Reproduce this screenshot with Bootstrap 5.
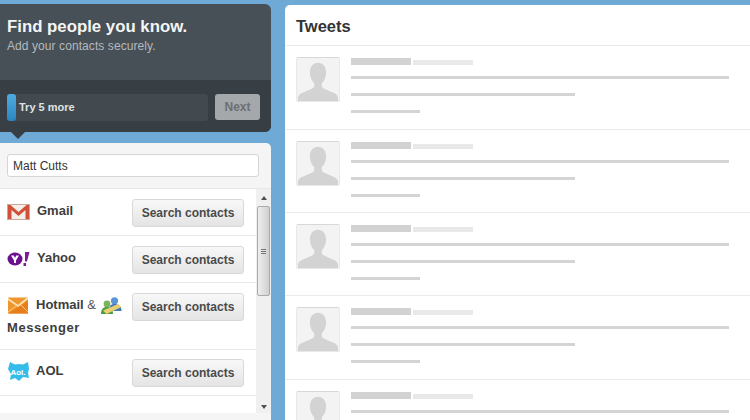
<!DOCTYPE html>
<html lang="en">
<head>
    <meta charset="UTF-8">
    <meta name="viewport" content="width=device-width, initial-scale=1.0">
    <title>Find people you know</title>
    <link href="https://cdn.jsdelivr.net/npm/bootstrap@5.3.0/dist/css/bootstrap.min.css" rel="stylesheet">
    <style>
        html, body {
            height: 420px;
            overflow: hidden;
        }
        body {
            background-color: #6fa9d6;
            font-family: "Liberation Sans", Arial, sans-serif;
            color: #333;
        }
        .page-wrap {
            height: 420px;
            padding-top: 4px;
            gap: 14px;
        }
        .side-col {
            width: 271px;
            flex: none;
        }
        .main-col {
            margin-top: 1px;
            border: 0;
            border-radius: 5px 0 0 0;
            background: #fff;
        }
        /* dark box */
        .finder-box {
            height: 128px;
            background: #474f57;
            border-radius: 0 6px 6px 0;
            position: relative;
        }
        .finder-box::after {
            content: "";
            position: absolute;
            left: 11px;
            top: 128px;
            border: 7px solid transparent;
            border-bottom: 0;
            border-top-color: #373f45;
        }
        .finder-top {
            height: 76px;
            padding: 13px 7px 0;
        }
        .finder-top h1 {
            font-size: 16.8px;
            line-height: 20px;
            font-weight: 700;
            color: #f4f5f5;
            margin: 0 0 2px;
        }
        .finder-top p {
            font-size: 12px;
            line-height: 15px;
            letter-spacing: .08px;
            color: #b5babd;
            margin: 0;
        }
        .finder-bottom {
            height: 52px;
            background: #373f45;
            padding: 14px 11px 0 7px;
            border-radius: 0 0 6px 0;
            gap: 7px;
        }
        .try-track {
            width: 201px;
            height: 27px;
            background: #424a50;
            border-radius: 3px;
            font-size: 11px;
            font-weight: 700;
            color: #dfe2e3;
        }
        .try-fill {
            width: 9px;
            height: 27px;
            background: linear-gradient(#4fabdf, #2a86bf);
            border-radius: 3px;
            margin-right: 3px;
        }
        .next-btn {
            width: 45px;
            height: 26px;
            padding: 0;
            border: 0;
            border-radius: 3px;
            background: #a5a8ab;
            color: #6c7073;
            font-size: 12px;
            font-weight: 700;
        }
        /* search panel */
        .contact-panel {
            height: 277px;
            margin-top: 11px;
            background: #f5f5f5;
            border-radius: 0 5px 0 0;
            padding-top: 11px;
        }
        .name-input {
            display: block;
            width: 252px;
            height: 23px;
            margin-left: 7px;
            padding: 0 5px;
            border: 1px solid #d5d5d5;
            border-radius: 3px;
            font-size: 12px;
            color: #333;
        }
        .contact-scroll {
            margin-top: 11px;
            height: 225px;
            background: #fff;
            border-top: 1px solid #e8e8e8;
        }
        .contact-item {
            padding: 10px 12px 0 7px;
            border-bottom: 1px solid #e8e8e8;
            height: 47px;
        }
        .contact-item.tall-item {
            height: 67px;
        }
        .contact-item.last-item {
            height: 46px;
            padding-top: 9px;
        }
        .contact-name {
            width: 120px;
            font-size: 13px;
            line-height: 23px;
            font-weight: 700;
            color: #3d3d3d;
        }
        .contact-name svg {
            vertical-align: middle;
            margin-right: 7px;
        }
        .contact-name .amp {
            font-weight: 400;
            color: #555;
        }
        .contact-name .msn-icon {
            margin: 0 0 0 1px;
        }
        .wide-word {
            letter-spacing: .55px;
        }
        .search-btn {
            width: 112px;
            height: 28px;
            padding: 0;
            flex: none;
            border: 1px solid #d8d8d8;
            border-radius: 3px;
            background: linear-gradient(#f8f8f8, #e4e4e4);
            color: #4a4a4a;
            font-size: 12px;
            font-weight: 700;
        }
        /* fake scrollbar */
        .scroll-rail {
            width: 15px;
            flex: none;
            background: #f0f0f0;
            padding-top: 7px;
        }
        .scroll-arrow-up {
            border: 3px solid transparent;
            border-top: 0;
            border-bottom: 4px solid #505050;
            width: 0;
        }
        .scroll-arrow-down {
            border: 3px solid transparent;
            border-bottom: 0;
            border-top: 4px solid #505050;
            width: 0;
            margin-top: 109px;
        }
        .scroll-thumb {
            width: 13px;
            height: 90px;
            margin-top: 6px;
            border: 1px solid #aaa;
            border-radius: 2px;
            background: linear-gradient(90deg, #eee, #cfcfcf);
        }
        .scroll-thumb i {
            display: block;
            width: 5px;
            height: 5px;
            border-top: 1px solid #777;
            border-bottom: 1px solid #777;
            position: relative;
        }
        .scroll-thumb i::after {
            content: "";
            position: absolute;
            left: 0;
            right: 0;
            top: 1px;
            border-top: 1px solid #777;
        }
        /* tweets */
        .tweets-head {
            height: 41px;
            padding: 11px 11px 0;
            border-bottom: 1px solid #ebebeb;
        }
        .tweets-head h2 {
            font-size: 16.5px;
            line-height: 20px;
            font-weight: 700;
            color: #333;
            margin: 0;
        }
        #tweet-list {
            margin-top: .4px;
        }
        .tweet-row {
            height: 83.3px;
            flex: none;
            padding: 11px 21px 0 11px;
            border-bottom: 1px solid #ebebeb;
            gap: 11px;
        }
        .tweet-pic {
            width: 44px;
            height: 45px;
            flex: none;
            background: #f3f3f3;
            border: 1px solid #e8e8e8;
            border-top-color: #d8d8d8;
            border-radius: 2px;
            display: block;
        }
        .name-bar {
            width: 60px;
            height: 7px;
            margin-top: 1px;
            background: #d2d2d2;
        }
        .meta-bar {
            width: 60px;
            height: 5px;
            margin: 3px 0 0 2px;
            background: #e9e9e9;
        }
        .line-bar {
            height: 3px;
            background: #d4d4d4;
            margin-top: 14px;
        }
        .line-bar.first-line {
            margin-top: 11px;
        }
        .w-long { width: 378px; }
        .w-mid { width: 224px; }
        .w-short { width: 69px; }
    </style>
</head>
<body>
    <div class="page-wrap d-flex">
        <div class="side-col">
            <div class="finder-box">
                <div class="finder-top">
                    <h1>Find people you know.</h1>
                    <p>Add your contacts securely.</p>
                </div>
                <div class="finder-bottom d-flex align-items-start">
                    <div class="try-track d-flex align-items-center">
                        <div class="try-fill"></div>
                        <span>Try 5 more</span>
                    </div>
                    <button class="btn next-btn">Next</button>
                </div>
            </div>

            <div class="contact-panel">
                <input type="text" class="form-control name-input" value="Matt Cutts">
                <div class="contact-scroll d-flex">
                    <div class="flex-grow-1">
                        <div class="contact-item d-flex justify-content-between align-items-start">
                            <div class="contact-name">
                                <svg width="23" height="16" viewBox="0 0 23 16">
                                    <rect x="0.5" y="0.5" width="22" height="15" fill="#f6efe8" stroke="#c9a99a"/>
                                    <path d="M1 15V1h2.500L11.500 8 19.500 1H22v14h-3.500V6l-7 6-7-6v9z" fill="#d0503a"/>
                                </svg>Gmail
                            </div>
                            <button class="btn search-btn">Search contacts</button>
                        </div>
                        <div class="contact-item d-flex justify-content-between align-items-start">
                            <div class="contact-name">
                                <svg width="23" height="14" viewBox="0 0 23 14">
                                    <ellipse cx="8" cy="7" rx="7.500" ry="6.500" fill="#6d0f8f"/>
                                    <path d="M4 3.500h2.800L8 6l1.200-2.500H12L9 8.500V11H7V8.500z" fill="#fff"/>
                                    <path d="M18 0h4.500l-2.500 9.500h-2zM16.500 11h2.500v3h-2.500z" fill="#7b1a9b"/>
                                </svg>Yahoo
                            </div>
                            <button class="btn search-btn">Search contacts</button>
                        </div>
                        <div class="contact-item tall-item d-flex justify-content-between align-items-start">
                            <div class="contact-name">
                                <svg width="22" height="17" viewBox="0 0 22 17">
                                    <rect x="1" y="0.500" width="20" height="16" rx="1" fill="#f0962e"/>
                                    <path d="M1 16.500L21 4v12.500z" fill="#e67e1c"/>
                                    <path d="M1 2l10 7L21 1" fill="none" stroke="#fde3b4" stroke-width="1.800"/>
                                    <path d="M1 15l8-6M21 15l-7-7" stroke="#fbc77a" stroke-width="1"/>
                                </svg>Hotmail <span class="amp">&amp;</span>
                                <svg class="msn-icon" width="21" height="18" viewBox="0 0 21 18">
                                    <circle cx="6" cy="7" r="3.400" fill="#7ab55c"/>
                                    <path d="M0 17c0-6 3-7 6-7s6 1 6 7z" fill="#4f9a45"/>
                                    <circle cx="13.500" cy="3.800" r="3.600" fill="#5a96d6"/>
                                    <path d="M8 14c0-6 2.500-7 5.500-7s7 1 7 7z" fill="#3d78bd"/>
                                    <path d="M2 13.500l15-6.500 3.500 3-15 7z" fill="#e9cf6e"/>
                                </svg> <span class="wide-word">Messenger</span>
                            </div>
                            <button class="btn search-btn">Search contacts</button>
                        </div>
                        <div class="contact-item last-item d-flex justify-content-between align-items-start">
                            <div class="contact-name">
                                <svg width="22" height="19" viewBox="0 0 22 19">
                                    <path d="M3 0l5 2.500L12 2l4 .5L21 0l1 7-1 4 1 5-6-1-4 4-4-3-5 2 1-6-3-5z" fill="#35bdea"/>
                                    <text x="11" y="12.500" font-size="8" font-weight="700" fill="#fff" text-anchor="middle" font-family="Liberation Sans, sans-serif">Aol.</text>
                                </svg>AOL
                            </div>
                            <button class="btn search-btn">Search contacts</button>
                        </div>
                    </div>
                    <div class="scroll-rail d-flex flex-column align-items-center">
                        <div class="scroll-arrow-up"></div>
                        <div class="scroll-thumb d-flex align-items-center justify-content-center"><i></i></div>
                        <div class="scroll-arrow-down"></div>
                    </div>
                </div>
            </div>
        </div>

        <div class="main-col flex-grow-1 overflow-hidden">
            <div class="tweets-head"><h2>Tweets</h2></div>
            <div id="tweet-list"></div>
        </div>
    </div>

    <script>
        // five placeholder tweets, all the same
        let rows = '';
        for (let i = 0; i < 5; i++) {
            rows += `<div class="tweet-row d-flex">
                <svg class="tweet-pic" viewBox="0 0 44 45">
                    <path d="M22 5c-5 0-8.500 4-8.500 10 0 5 2 9 4.500 11.500v3c0 1.500-3 3-8 5C5 36.500 1 38 1 42v3h42v-3c0-4-4-5.500-9-7.500-5-2-8-3.500-8-5v-3c2.500-2.500 4.500-6.500 4.500-11.500C30.500 9 27 5 22 5z" fill="#d3d3d3"/>
                </svg>
                <div>
                    <div class="d-flex">
                        <div class="name-bar"></div>
                        <div class="meta-bar"></div>
                    </div>
                    <div class="line-bar first-line w-long"></div>
                    <div class="line-bar w-mid"></div>
                    <div class="line-bar w-short"></div>
                </div>
            </div>`;
        }
        document.getElementById('tweet-list').innerHTML = rows;
    </script>
    <script src="https://cdn.jsdelivr.net/npm/bootstrap@5.3.0/dist/js/bootstrap.bundle.min.js"></script>
</body>
</html>
